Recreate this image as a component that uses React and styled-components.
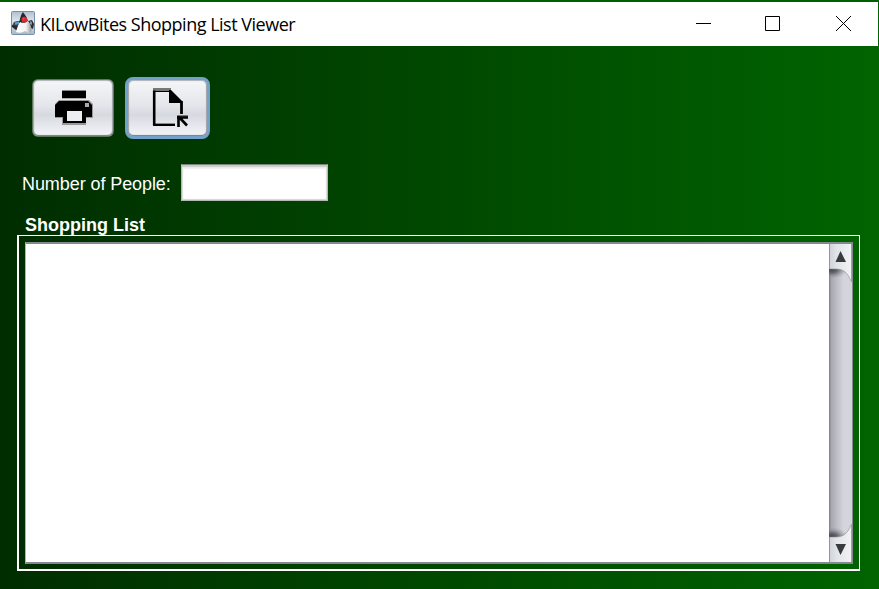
import React from "react";
import styled, { createGlobalStyle } from "styled-components";

const Global = createGlobalStyle`
  * { box-sizing: border-box; }
  body { margin: 0; overflow: hidden; }
`;

const Window = styled.div`
  width: 879px;
  height: 589px;
  display: flex;
  flex-direction: column;
  border-top: 2px solid #006000;
  background: linear-gradient(90deg, #002d00 0%, #006400 100%);
  font-family: "Liberation Sans", Arial, sans-serif;
  color: #fff;
`;

const TitleBar = styled.header`
  flex: 0 0 44px;
  width: 878px;
  display: flex;
  align-items: center;
  padding: 0 0 2px 11px;
  background: #fff;
  color: #000;
`;

const Title = styled.h1`
  flex: 1;
  margin: 0 0 0 5px;
  padding-top: 2px;
  font: 400 18px/24px "Open Sans", "Noto Sans", sans-serif;
  letter-spacing: -0.49px;
  white-space: nowrap;
`;

const WindowControls = styled.div`
  display: flex;
  gap: 53px;
  padding-right: 26px;
  svg { display: block; width: 17px; height: 17px; }
`;

const Content = styled.main`
  flex: 1;
  display: flex;
  flex-direction: column;
  align-items: flex-start;
  padding: 31px 0 0 17px;
`;

const Toolbar = styled.div`
  display: flex;
  height: 62px;
  gap: 11px;
  padding-left: 15px;
`;

const ToolButton = styled.button`
  width: ${(p) => (p.$focused ? 85 : 82)}px;
  height: ${(p) => (p.$focused ? 62 : 58)}px;
  margin-top: ${(p) => (p.$focused ? 0 : 2)}px;
  padding: ${(p) => (p.$focused ? 0 : "0 0 0 1px")};
  border: ${(p) => (p.$focused ? "3px solid #72a1ca" : "1px solid #5c775c")};
  border-radius: ${(p) => (p.$focused ? 8 : 6)}px;
  background: linear-gradient(#f5f6f8 0%, #e5e6eb 45%, #d6d9df 62%, #e8eaef 85%, #f3f5f8 100%);
  box-shadow: inset 0 -1px 1px #777b84, inset 1px 0 1px #a5a8b0,
    inset -1px 0 1px #a5a8b0, inset 0 1px 1px #b4b6bc;
  svg { display: block; margin: auto; }
`;

const PeopleRow = styled.label`
  display: flex;
  align-items: center;
  height: 37px;
  margin: 25px 0 0 5px;
  font-size: 18px;
  white-space: nowrap;
`;

const PeopleLabel = styled.span`
  width: 159px;
  padding-top: 3px;
  letter-spacing: -0.08px;
`;

const PeopleInput = styled.input`
  width: 147px;
  height: 37px;
  padding: 4px 8px;
  border: 1px solid #b4bbb4;
  border-top-color: #7c857c;
  outline: none;
  background: #fff;
  box-shadow: inset 0 2px 1px #c9cac9, inset 0 4px 2px #eeeeee, inset 0 0 1px 1px #d5d5d5;
  font: inherit;
`;

const ListTitle = styled.h2`
  margin: 14px 0 0 8px;
  font-size: 18px;
  line-height: 20px;
`;

const ListFrame = styled.section`
  width: 843px;
  height: 336px;
  padding: 6px;
  border: solid #fff;
  border-width: 1px 1px 2px 2px;
`;

const ScrollPane = styled.div`
  display: flex;
  width: 828px;
  height: 322px;
  border: solid #85898f;
  border-width: 2px 1px 2px 1px;
  border-left-color: #b3b5be;
  background: #fff;
`;

const ListArea = styled.div`
  flex: 1;
`;

const ScrollBar = styled.div`
  width: 23px;
  display: flex;
  flex-direction: column;
  background: linear-gradient(90deg, #777a80 0, #a4a7ae 2px, #bcc0c6 8px, #d4d6dc 15px, #d1d4da 100%);
  svg { display: block; }
`;

const Thumb = styled.div`
  flex: 1;
`;

const DukeIcon = () => (
  <svg width="24" height="24" viewBox="0 0 24 24">
    <defs>
      <linearGradient id="duke-bg" x1="0" y1="0" x2="0" y2="1">
        <stop stopColor="#aebfcf" /><stop offset=".4" stopColor="#dce4ed" /><stop offset="1" stopColor="#a9b8c6" />
      </linearGradient>
      <linearGradient id="duke-body">
        <stop stopColor="#fff" /><stop offset=".65" stopColor="#f4f4f4" /><stop offset="1" stopColor="#969aa0" />
      </linearGradient>
    </defs>
    <rect x=".5" y=".5" width="23" height="23" rx="1" fill="url(#duke-bg)" stroke="#7890a8" />
    <path d="M3 11l3-1h4v4l-5 2-4-1z" fill="#3b4a58" />
    <path d="M4 11l4-.5v2.5l-4 .7z" fill="#5b9ac7" />
    <path d="M1 14l6 1 2 5-4-1-4-3z" fill="#26292c" />
    <path d="M17 10l4-1 2 4-1 5-4-2z" fill="#292c31" />
    <path d="M19 10l2 1v3l-2-1z" fill="#8299ad" />
    <path d="M12 1C10 3 9 8 8 12h9c0-5-3-8-5-11z" fill="#25272a" />
    <path d="M9 11c4 2 6 0 8-1 3 3 4 8 3 11-2 2-4 0-6-1-3 2-6 2-9 1 1-4 2-7 4-10z" fill="url(#duke-body)" />
    <circle cx="13.3" cy="8.6" r="2.9" fill="#d92b2f" />
    <circle cx="12.6" cy="7.7" r=".8" fill="#f4595b" />
  </svg>
);

const PrinterIcon = () => (
  <svg width="40" height="36" viewBox="0 0 40 36">
    <path d="M8 0h24v1H8z" fill="#888" />
    <path d="M8 1h24v7H8z" />
    <path d="M8 8h24v1H8z" fill="#aaa" />
    <path d="M5 10h30l4 4v14h-7v7H8v-7H1V14z" fill="#999" />
    <path d="M5 11h29l4 4v12h-6v6H9v-6H1V15z" />
    <path d="M13 21h15v10H13z" fill="#eceef1" />
    <path d="M31 13h4v4h-4z" fill="#aaa" />
  </svg>
);

const ExportIcon = () => (
  <svg width="40" height="42" viewBox="0 0 40 42">
    <path d="M5 1h18v3H5z" fill="#777" />
    <path d="M6.2 3.5v35" stroke="#000" strokeWidth="2.6" />
    <path d="M5 4h17v1H5z" />
    <path d="M5.2 37.8H27" stroke="#000" strokeWidth="2.4" />
    <path d="M21 3h2l11 11v2H21z" />
    <path d="M23 3l11 11" stroke="#777" />
    <path d="M33.5 14v13" stroke="#000" strokeWidth="2.8" />
    <path d="M29 28h12v2H29z" fill="#777" />
    <path d="M30.5 29v11M29 30.5h11M31 30l8 8.5" fill="none" stroke="#000" strokeWidth="2.6" />
  </svg>
);

const ScrollArrow = ({ down = false }) => (
  <svg width="23" height="38" viewBox="0 0 23 38">
    <defs>
      <linearGradient id={down ? "cap-down" : "cap-up"}>
        <stop stopColor="#ced1d7" /><stop offset=".35" stopColor="#e1e4e8" /><stop offset="1" stopColor="#f0f2f4" />
      </linearGradient>
      <radialGradient id={down ? "shade-down" : "shade-up"} gradientUnits="userSpaceOnUse" cx="2" cy="25" r="17" gradientTransform="matrix(1 0 0 .6 0 10)">
        <stop stopColor="#3c3e42" /><stop offset=".4" stopColor="#666970" /><stop offset="1" stopColor="#a2a5ac" stopOpacity="0" />
      </radialGradient>
    </defs>
    <g transform={down ? "matrix(1 0 0 -1 0 38)" : undefined}>
      <path d="M0 25h23v13H0z" fill={`url(#${down ? "shade-down" : "shade-up"})`} />
      <path d="M0 0h22v37C19 29 15 25 7 25H0z" fill={`url(#${down ? "cap-down" : "cap-up"})`} />
      <path d="M0 25h7c7 0 12 4 15 12" fill="none" stroke="#8a8d93" strokeWidth=".6" />
      <path d="M.5 0v25" stroke="#92959b" />
      <path d="M22.5 0v38" stroke="#9da1a7" />
      <path d="M6.5 18l5-11 5.5 11z" fill="#383a3e" />
    </g>
  </svg>
);

export default function App() {
  return (
    <Window>
      <Global />
      <TitleBar>
        <DukeIcon />
        <Title>KILowBites Shopping List Viewer</Title>
        <WindowControls>
          <svg viewBox="0 0 17 17"><path d="M1 8.5h15" stroke="#000" /></svg>
          <svg viewBox="0 0 17 17"><path d="M.5 1.5h14v14H.5z" fill="none" stroke="#000" /></svg>
          <svg viewBox="0 0 17 17"><path d="M1 1l15 15M16 1L1 16" stroke="#000" strokeWidth="1" /></svg>
        </WindowControls>
      </TitleBar>
      <Content>
        <Toolbar>
          <ToolButton aria-label="Print"><PrinterIcon /></ToolButton>
          <ToolButton aria-label="Export" $focused><ExportIcon /></ToolButton>
        </Toolbar>
        <PeopleRow>
          <PeopleLabel>Number of People:</PeopleLabel>
          <PeopleInput />
        </PeopleRow>
        <ListTitle>Shopping List</ListTitle>
        <ListFrame>
          <ScrollPane>
            <ListArea />
            <ScrollBar>
              <ScrollArrow />
              <Thumb />
              <ScrollArrow down />
            </ScrollBar>
          </ScrollPane>
        </ListFrame>
      </Content>
    </Window>
  );
}
